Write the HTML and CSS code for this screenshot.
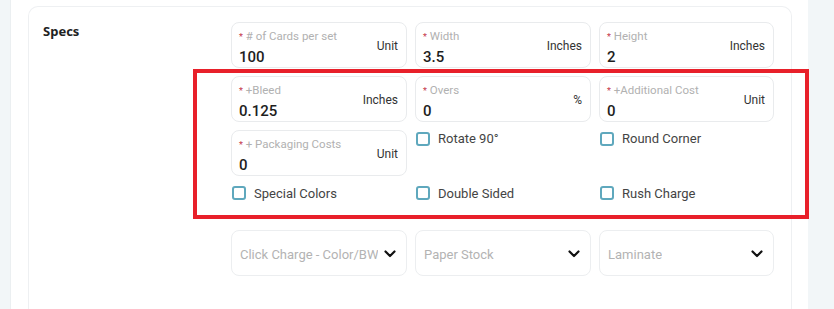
FILE: index.html
```html
<!DOCTYPE html>
<html>
<head>
<meta charset="utf-8">
<link rel="stylesheet" href="styles.css">
</head>
<body>
<div class="page">
  <div class="panel">
    <div class="card">
      <div class="section-title">Specs</div>
      <div class="section-body">
        <div class="grid">
          <div class="field">
            <div class="field-text">
              <div class="label"><span class="req">*</span> # of Cards per set</div>
              <div class="value">100</div>
            </div>
            <div class="unit">Unit</div>
          </div>
          <div class="field">
            <div class="field-text">
              <div class="label"><span class="req">*</span> Width</div>
              <div class="value">3.5</div>
            </div>
            <div class="unit">Inches</div>
          </div>
          <div class="field">
            <div class="field-text">
              <div class="label"><span class="req">*</span> Height</div>
              <div class="value">2</div>
            </div>
            <div class="unit">Inches</div>
          </div>

          <div class="field">
            <div class="field-text">
              <div class="label"><span class="req">*</span> +Bleed</div>
              <div class="value">0.125</div>
            </div>
            <div class="unit">Inches</div>
          </div>
          <div class="field">
            <div class="field-text">
              <div class="label"><span class="req">*</span> Overs</div>
              <div class="value">0</div>
            </div>
            <div class="unit">%</div>
          </div>
          <div class="field">
            <div class="field-text">
              <div class="label"><span class="req">*</span> +Additional Cost</div>
              <div class="value">0</div>
            </div>
            <div class="unit">Unit</div>
          </div>

          <div class="field">
            <div class="field-text">
              <div class="label"><span class="req">*</span> + Packaging Costs</div>
              <div class="value">0</div>
            </div>
            <div class="unit">Unit</div>
          </div>
          <label class="check top"><span class="box"></span>Rotate 90°</label>
          <label class="check top"><span class="box"></span>Round Corner</label>

          <label class="check"><span class="box"></span>Special Colors</label>
          <label class="check"><span class="box"></span>Double Sided</label>
          <label class="check"><span class="box"></span>Rush Charge</label>
        </div>

        <div class="selects">
          <div class="select"><span class="placeholder">Click Charge - Color/BW</span><svg class="chev" viewBox="0 0 12 8" width="12" height="8"><path d="M1.5 1.5 L6 6 L10.5 1.5" fill="none" stroke="#111" stroke-width="2.2" stroke-linecap="round" stroke-linejoin="round"/></svg></div>
          <div class="select"><span class="placeholder">Paper Stock</span><svg class="chev" viewBox="0 0 12 8" width="12" height="8"><path d="M1.5 1.5 L6 6 L10.5 1.5" fill="none" stroke="#111" stroke-width="2.2" stroke-linecap="round" stroke-linejoin="round"/></svg></div>
          <div class="select"><span class="placeholder">Laminate</span><svg class="chev" viewBox="0 0 12 8" width="12" height="8"><path d="M1.5 1.5 L6 6 L10.5 1.5" fill="none" stroke="#111" stroke-width="2.2" stroke-linecap="round" stroke-linejoin="round"/></svg></div>
        </div>
      </div>
    </div>
  </div>
  <div class="highlight"></div>
</div>
</body>
</html>
```

FILE: styles.css
```css
* { box-sizing: border-box; }
html, body { margin: 0; padding: 0; }
body {
  width: 834px;
  height: 309px;
  overflow: hidden;
  background: #f2f6f8;
  font-family: "Roboto", "Liberation Sans", sans-serif;
  color: #222;
}
.page {
  position: relative;
  height: 309px;
  padding-left: 10px;
  padding-right: 26px;
}
.panel {
  background: #fff;
  height: 309px;
  border-left: 1px solid #ebeff1;
  padding: 6px 16px 0 17px;
}
.card {
  border: 1px solid #eef0f2;
  border-bottom: none;
  border-radius: 10px 10px 0 0;
  height: 303px;
  display: flex;
  padding: 15px 0 0 14px;
}
.section-title {
  width: 188px;
  font-size: 13px;
  font-weight: 700;
  color: #222;
  padding-top: 0;
  font-family: "Noto Sans", sans-serif;
}
.section-body {
  display: flex;
  flex-direction: column;
}
.grid {
  display: grid;
  grid-template-columns: 176px 176px 175px;
  grid-template-rows: 46px 46px 46px 18px;
  column-gap: 8px;
  row-gap: 8px;
}
.field {
  border: 1px solid #e9ebed;
  border-radius: 8px;
  display: flex;
  align-items: center;
  justify-content: space-between;
  padding: 0 8px 0 7px;
}
.field-text {
  display: flex;
  flex-direction: column;
  gap: 4px;
  padding-top: 5px;
}
.label {
  font-size: 11.5px;
  color: #b1b1b1;
  line-height: 13px;
  white-space: nowrap;
}
.req {
  color: #c4364a;
  font-size: 9px;
}
.value {
  font-size: 15px;
  font-weight: 500;
  color: #1e1e1e;
  line-height: 18px;
}
.unit {
  font-size: 12px;
  color: #333;
  padding-top: 2px;
}
.check {
  display: flex;
  align-items: center;
  gap: 8px;
  font-size: 13px;
  color: #444;
  padding-left: 1px;
}
.check.top {
  align-self: start;
  padding-top: 1px;
}
.box {
  width: 14px;
  height: 14px;
  border: 2px solid #5fa8bd;
  border-radius: 3px;
  display: inline-block;
  flex: none;
}
.selects {
  display: grid;
  grid-template-columns: 176px 176px 175px;
  column-gap: 8px;
  margin-top: 28px;
}
.select {
  height: 46px;
  border: 1px solid #eceef0;
  border-radius: 8px;
  display: flex;
  align-items: center;
  justify-content: space-between;
  padding: 2px 10px 0 8px;
}
.placeholder {
  font-size: 13px;
  color: #b3b3b3;
  white-space: nowrap;
  overflow: hidden;
}
.chev { flex: none; }
.highlight {
  position: absolute;
  left: 193px;
  top: 69px;
  width: 616px;
  height: 150px;
  border: 4px solid #e8202a;
}
```
